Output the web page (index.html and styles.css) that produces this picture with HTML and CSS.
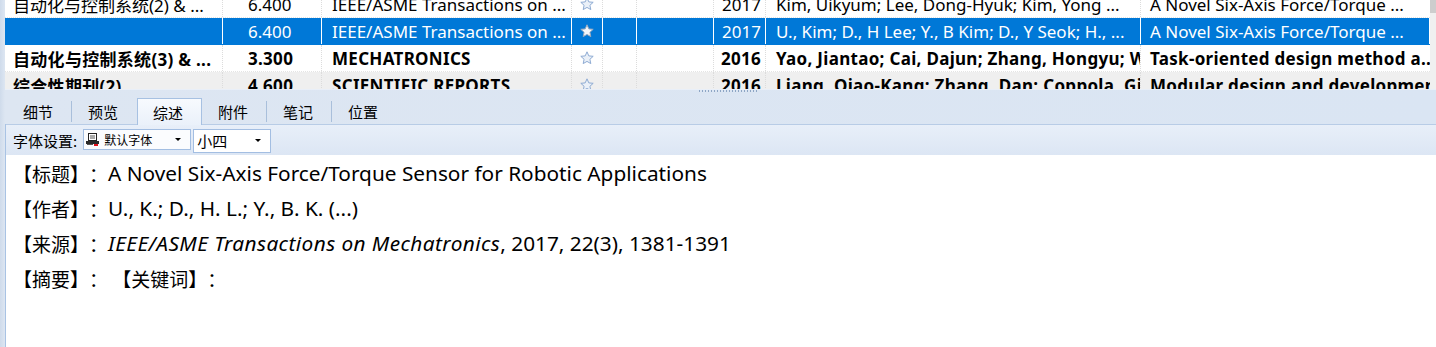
FILE: index.html
```html
<!DOCTYPE html>
<html lang="zh-CN">
<head>
<meta charset="utf-8">
<title>文献详情</title>
<link rel="stylesheet" href="styles.css">
</head>
<body>
<svg class="defs" width="0" height="0" aria-hidden="true">
  <symbol id="star" viewBox="0 0 14 14">
    <path d="M7 0.8 L8.8 4.9 L13.2 5.3 L9.9 8.3 L10.8 12.6 L7 10.4 L3.2 12.6 L4.1 8.3 L0.8 5.3 L5.2 4.9 Z"/>
  </symbol>
</svg>
<div class="app">
  <div class="grid">
    <div class="viewport">
      <div class="rows">
        <div class="row">
          <div class="cell c1">自动化与控制系统(2) &amp; ...</div>
          <div class="cell c2">6.400</div>
          <div class="cell c3">IEEE/ASME Transactions on ...</div>
          <div class="cell c4"><svg class="star"><use href="#star"/></svg></div>
          <div class="cell c5"></div>
          <div class="cell c6"></div>
          <div class="cell c7">2017</div>
          <div class="cell c8">Kim, Uikyum; Lee, Dong-Hyuk; Kim, Yong ...</div>
          <div class="cell c9">A Novel Six-Axis Force/Torque ...</div>
        </div>
        <div class="row selected">
          <div class="cell c1"></div>
          <div class="cell c2">6.400</div>
          <div class="cell c3">IEEE/ASME Transactions on ...</div>
          <div class="cell c4"><svg class="star"><use href="#star"/></svg></div>
          <div class="cell c5"></div>
          <div class="cell c6"></div>
          <div class="cell c7">2017</div>
          <div class="cell c8">U., Kim; D., H Lee; Y., B Kim; D., Y Seok; H., ...</div>
          <div class="cell c9">A Novel Six-Axis Force/Torque ...</div>
        </div>
        <div class="row bold">
          <div class="cell c1">自动化与控制系统(3) &amp; ...</div>
          <div class="cell c2">3.300</div>
          <div class="cell c3">MECHATRONICS</div>
          <div class="cell c4"><svg class="star"><use href="#star"/></svg></div>
          <div class="cell c5"></div>
          <div class="cell c6"></div>
          <div class="cell c7">2016</div>
          <div class="cell c8">Yao, Jiantao; Cai, Dajun; Zhang, Hongyu; Wang, Yu</div>
          <div class="cell c9">Task-oriented design method a..</div>
        </div>
        <div class="row bold alt">
          <div class="cell c1">综合性期刊(2)</div>
          <div class="cell c2">4.600</div>
          <div class="cell c3">SCIENTIFIC REPORTS</div>
          <div class="cell c4"><svg class="star"><use href="#star"/></svg></div>
          <div class="cell c5"></div>
          <div class="cell c6"></div>
          <div class="cell c7">2016</div>
          <div class="cell c8">Liang, Qiao-Kang; Zhang, Dan; Coppola, Gianmarc</div>
          <div class="cell c9">Modular design and development</div>
        </div>
      </div>
    </div>
    <div class="vscroll"><div class="thumb"></div></div>
  </div>
  <div class="splitter"><div class="grip"></div></div>
  <div class="tabs">
    <div class="tab sep">细节</div>
    <div class="tab">预览</div>
    <div class="tab active">综述</div>
    <div class="tab sep">附件</div>
    <div class="tab sep">笔记</div>
    <div class="tab">位置</div>
  </div>
  <div class="panel">
    <div class="toolbar">
      <span class="tb-label">字体设置:</span>
      <div class="combo combo-font">
        <svg class="font-icon" width="13" height="13" viewBox="0 0 13 13">
          <rect x="2.5" y="0.5" width="8" height="7" fill="#fff" stroke="#222"/>
          <line x1="4" y1="3" x2="9" y2="3" stroke="#555"/>
          <line x1="4" y1="5" x2="9" y2="5" stroke="#555"/>
          <rect x="0" y="8" width="13" height="3" fill="#2a2a2a"/>
          <rect x="8" y="11" width="4" height="2" fill="#e0101a"/>
          <rect x="1" y="11" width="6" height="1" fill="#555"/>
        </svg>
        <span class="combo-text">默认字体</span>
        <span class="arrow"></span>
      </div>
      <div class="combo combo-size">
        <span class="combo-text">小四</span>
        <span class="arrow"></span>
      </div>
    </div>
    <div class="content">
      <p class="line"><span class="lbl">【标题】：</span><span class="val">A Novel Six-Axis Force/Torque Sensor for Robotic Applications</span></p>
      <p class="line"><span class="lbl">【作者】：</span><span class="val">U., K.; D., H. L.; Y., B. K. (...)</span></p>
      <p class="line"><span class="lbl">【来源】：</span><span class="val"><i>IEEE/ASME Transactions on Mechatronics</i>, 2017, 22(3), 1381-1391</span></p>
      <p class="line"><span class="lbl">【摘要】： 【关键词】：</span></p>
    </div>
  </div>
</div>
</body>
</html>
```
FILE: styles.css
```css
* { box-sizing: border-box; }

html, body {
  margin: 0;
  padding: 0;
}

body {
  width: 1436px;
  height: 347px;
  overflow: hidden;
  background: #fff;
  font-family: "Noto Sans", "Noto Sans CJK SC", sans-serif;
  color: #000;
  text-spacing-trim: space-all;
}

.defs {
  position: absolute;
  width: 0;
  height: 0;
}

.app {
  height: 347px;
  display: flex;
  flex-direction: column;
  padding-left: 5px;
  background: linear-gradient(to right, #cfdbeb 0, #dde6f2 5px, #dae5f3 100%);
}

/* ---------- grid ---------- */
.grid {
  height: 89px;
  display: flex;
  background: #fff;
  flex-shrink: 0;
}

.viewport {
  flex: 1;
  overflow: hidden;
}

.rows {
  margin-top: -9px;
}

.row {
  display: grid;
  grid-template-columns: 218px 99px 250px 31px 34px 77px 52px 375px 289px;
  height: 27px;
  font-size: 17px;
  background: #fff;
  border-bottom: 1px dotted #e4e4e4;
}

.row.alt { background: #efefef; }
.row.bold { font-weight: 700; letter-spacing: 0.3px; }

.row.selected {
  background: #0078d7;
  color: #fff;
  border-bottom-color: #0078d7;
}

.cell {
  display: flex;
  align-items: center;
  white-space: nowrap;
  overflow: hidden;
  border-right: 1px dotted #dcdcdc;
  padding-left: 9px;
}

.row.selected .cell { border-right: 1px solid #fff; }

.c1 { padding-left: 8px; }
.c2 { padding-left: 25px; }
.c3 { padding-left: 10px; }
.c4 { padding-left: 0; justify-content: center; }
.c7 { justify-content: flex-end; padding-left: 0; padding-right: 4px; }
.c8 { padding-left: 10px; }
.c9 { padding-left: 9px; border-right: none; }

.star {
  width: 14px;
  height: 14px;
  fill: #eaf0f8;
  stroke: #8eabd3;
  stroke-width: 1;
}

.row.selected .star {
  fill: #f4f6fa;
  stroke: #9aa9bd;
}

.vscroll {
  width: 6px;
  background: #f0f0f0;
}

.vscroll .thumb {
  height: 13px;
  background: #cdcdcd;
}

/* ---------- splitter ---------- */
.splitter {
  height: 4px;
  flex-shrink: 0;
  border-top: 1px solid #e9eff8;
  display: flex;
}

.grip {
  width: 59px;
  height: 2px;
  margin-left: 693px;
  background-image: radial-gradient(circle, #8ea6c5 0.8px, transparent 1px);
  background-size: 3px 2px;
}

/* ---------- tabs ---------- */
.tabs {
  height: 31px;
  flex-shrink: 0;
  display: flex;
  align-items: flex-end;
  padding-left: 2px;
  position: relative;
  z-index: 1;
}

.tab {
  width: 65px;
  height: 26px;
  display: flex;
  align-items: center;
  justify-content: center;
  font-size: 15px;
  font-family: "Noto Sans CJK SC", sans-serif;
  padding-top: 1px;
  padding-right: 3px;
}

.tab.sep {
  background: linear-gradient(#a9bfdb, #a9bfdb) no-repeat right 3px / 1px 21px;
}

.tab.active {
  height: 27px;
  margin-bottom: -1px;
  border: 1px solid #a7c1e2;
  border-bottom: none;
  background: linear-gradient(#f7fafe, #eaf1fa);
}

/* ---------- panel ---------- */
.panel {
  flex: 1;
  display: flex;
  flex-direction: column;
  border-left: 1px solid #a9c3e4;
  background: #fff;
}

.toolbar {
  height: 31px;
  flex-shrink: 0;
  border-top: 1px solid #b8cce6;
  background: linear-gradient(#e8eff9, #dce6f4);
  display: flex;
  align-items: center;
  padding-left: 7px;
  font-family: "Noto Sans CJK SC", sans-serif;
}

.tb-label {
  font-size: 15px;
  margin-right: 6px;
}

.combo {
  display: flex;
  align-items: center;
  border: 1px solid #a3bee2;
  background: #fbfcfe;
}

.combo-font {
  width: 108px;
  height: 21px;
  margin-top: -2px;
  padding-left: 2px;
}

.combo-size {
  width: 78px;
  height: 24px;
  margin-left: 2px;
  background: #fff;
  padding-left: 3px;
  margin-top: 1px;
}

.font-icon { flex-shrink: 0; }

.combo-font .combo-text {
  font-size: 12px;
  margin-left: 5px;
}

.combo-size .combo-text {
  font-size: 15px;
}

.arrow {
  margin-left: auto;
  margin-right: 9px;
  width: 0;
  height: 0;
  border-left: 3px solid transparent;
  border-right: 3px solid transparent;
  border-top: 3px solid #000;
}

/* ---------- content ---------- */
.content {
  flex: 1;
  padding: 1px 0 0 7px;
  background: #fff;
}

.line {
  margin: 0;
  height: 35px;
  line-height: 35px;
  white-space: nowrap;
}

.lbl {
  font-size: 19px;
  font-family: "Noto Sans CJK SC", sans-serif;
  vertical-align: top;
}

.val {
  font-size: 20.8px;
  vertical-align: top;
}

.line i {
  font-style: italic;
  letter-spacing: 0.42px;
}
```
